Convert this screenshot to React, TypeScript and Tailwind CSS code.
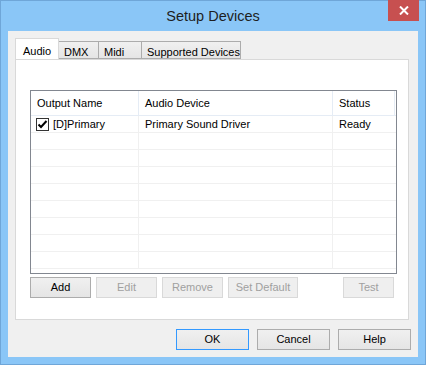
import React from "react";

const FONT = { fontFamily: '"Liberation Sans", Arial, sans-serif' };

function TabItem({ label, active, width }: { label: string; active?: boolean; width: string }) {
  if (active) {
    return (
      <div
        className={`${width} relative z-10 -mb-px h-[21px] whitespace-nowrap border border-b-0 border-[#d9d9d9] bg-white pl-[7px] pt-[4px] text-[11px] text-black`}
      >
        {label}
      </div>
    );
  }
  return (
    <div
      className={`${width} -ml-px mt-[3px] h-[18px] overflow-hidden whitespace-nowrap border border-[#acacac] bg-gradient-to-b from-[#f0f0f0] to-[#e5e5e5] pl-[5px] pt-[2px] text-[11px] text-black first:ml-0`}
    >
      {label}
    </div>
  );
}

function Btn({
  label,
  width,
  disabled,
  primary,
}: {
  label: string;
  width: string;
  disabled?: boolean;
  primary?: boolean;
}) {
  const tone = disabled
    ? "border-[#d9d9d9] bg-[#efefef] text-[#a0a0a0]"
    : primary
      ? "border-[#3399ff] bg-gradient-to-b from-[#f0f0f0] to-[#e5e5e5] text-black"
      : "border-[#acacac] bg-gradient-to-b from-[#f0f0f0] to-[#e5e5e5] text-black";
  return (
    <div className={`${width} flex h-[21px] items-center justify-center border text-[11px] ${tone}`}>
      {label}
    </div>
  );
}

function CheckBox() {
  return (
    <div className="flex h-[13px] w-[13px] items-center justify-center border border-[#333333] bg-white">
      <svg width="11" height="11" viewBox="0 0 11 11">
        <path d="M1.5 5.5 L4 8 L9.5 2" fill="none" stroke="#000" strokeWidth="2" />
      </svg>
    </div>
  );
}

const emptyRows = Array.from({ length: 8 });

export default function App() {
  return (
    <div style={FONT} className="flex h-[365px] w-[426px] flex-col border border-[#6fa6d8] bg-[#8ac6f7]">
      {/* title bar */}
      <div className="relative flex h-[30px] items-center justify-center">
        <span className="pt-[1px] text-[14.5px] text-[#1e1e1e]">Setup Devices</span>
        <div className="absolute right-[6px] top-[-1px] flex h-[21px] w-[31px] items-center justify-center bg-[#c75050]">
          <svg width="10" height="9" viewBox="0 0 10 9">
            <path d="M1 0.5 L9 8.5 M9 0.5 L1 8.5" stroke="#fff" strokeWidth="2" />
          </svg>
        </div>
      </div>

      {/* client area */}
      <div className="mx-[7px] flex h-[326px] flex-col bg-[#f0f0f0] px-[7px] pt-[7px]">
        <div className="flex items-start">
          <TabItem label="Audio" active width="w-[44px]" />
          <TabItem label="DMX" width="w-[41px]" />
          <TabItem label="Midi" width="w-[44px]" />
          <TabItem label="Supported Devices" width="w-[100px]" />
        </div>

        <div className="flex h-[261px] w-[394px] flex-col border border-[#d9d9d9] bg-white px-[14px] pt-[30px]">
          {/* list view */}
          <div className="flex h-[184px] w-[367px] flex-col overflow-hidden border border-[#828790] bg-white text-[11px] text-black">
            <div className="flex h-[25px] shrink-0 border-b border-[#e5ecf5]">
              <div className="flex w-[108px] items-center border-r border-[#e5ecf5] pl-[6px]">Output Name</div>
              <div className="flex w-[194px] items-center border-r border-[#e5ecf5] pl-[6px]">Audio Device</div>
              <div className="flex w-[62px] items-center border-r border-[#e5ecf5] pl-[6px]">Status</div>
            </div>
            <div className="flex h-[17px] shrink-0 border-b border-[#f0f0f0]">
              <div className="flex w-[108px] items-center gap-[4px] border-r border-[#f0f0f0] pl-[5px]">
                <CheckBox />
                <span>[D]Primary</span>
              </div>
              <div className="flex w-[194px] items-center border-r border-[#f0f0f0] pl-[6px]">Primary Sound Driver</div>
              <div className="flex flex-1 items-center pl-[6px]">Ready</div>
            </div>
            {emptyRows.map((_, i) => (
              <div key={i} className="flex h-[17px] shrink-0 border-b border-[#f0f0f0]">
                <div className="w-[108px] border-r border-[#f0f0f0]" />
                <div className="w-[194px] border-r border-[#f0f0f0]" />
                <div className="flex-1" />
              </div>
            ))}
          </div>

          {/* list buttons */}
          <div className="mt-[3px] flex">
            <Btn label="Add" width="w-[61px]" />
            <div className="ml-[5px]">
              <Btn label="Edit" width="w-[61px]" disabled />
            </div>
            <div className="ml-[5px]">
              <Btn label="Remove" width="w-[61px]" disabled />
            </div>
            <div className="ml-[5px]">
              <Btn label="Set Default" width="w-[70px]" disabled />
            </div>
            <div className="ml-auto">
              <Btn label="Test" width="w-[51px]" disabled />
            </div>
          </div>
        </div>

        {/* dialog buttons */}
        <div className="mt-[9px] flex justify-end gap-[8px]">
          <Btn label="OK" width="w-[73px]" primary />
          <Btn label="Cancel" width="w-[73px]" />
          <Btn label="Help" width="w-[73px]" />
        </div>
      </div>
    </div>
  );
}
